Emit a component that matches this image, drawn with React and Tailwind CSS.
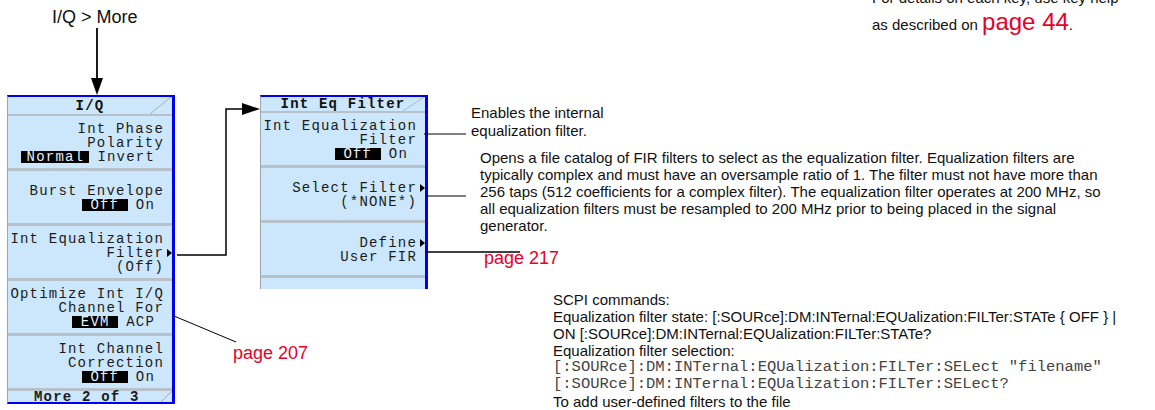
import React from 'react';

const mono = { fontFamily: '"Liberation Mono", "DejaVu Sans Mono", monospace' };

function Arrow() {
  return (
    <svg width="5" height="8" viewBox="0 0 5 8" className="absolute -right-[8px] top-[3px]">
      <polygon points="0,0 5,4 0,8" fill="#000" />
    </svg>
  );
}

function Option({ on, off, w }) {
  return (
    <div className="pr-[9px]">
      <span className={`inline-block bg-black text-center leading-[12px] text-[#e6f3ff] ${w}`}>{on}</span>
      <span className="ml-[8px]">{off}</span>
    </div>
  );
}

function Key({ lines, arrowAt = -1, h = 'h-[55px]' }) {
  return (
    <div className={`flex ${h} flex-col items-end justify-center border-b-[3px] border-b-[#b7c1ca] pr-[8px] pt-[2px]`}>
      {lines.map((ln, i) => (
        <div key={i} className="relative text-right">
          {typeof ln === 'string' ? ln : <Option {...ln} />}
          {i === arrowAt && <Arrow />}
        </div>
      ))}
    </div>
  );
}

function Title({ text, h }) {
  return (
    <div className={`relative flex ${h} items-center justify-center border-b-2 border-b-[#b7c1ca] font-bold text-[#111]`}>
      <span>{text}</span>
      <svg className="absolute right-0 top-0 h-full w-[24px]" viewBox="0 0 24 18" preserveAspectRatio="none">
        <line x1="2" y1="18" x2="23" y2="0" stroke="#a4afb8" strokeWidth="1" />
      </svg>
    </div>
  );
}

export default function App() {
  return (
    <div className="relative h-[410px] w-[1155px] overflow-hidden bg-white text-[#111]" style={{ fontFamily: '"Liberation Sans", Arial, sans-serif' }}>
      <div className="flex items-start gap-[85px] pl-[7px] pt-[95px] text-[14px] leading-[14px] tracking-[1.2px] text-[#1b1b1b]" style={mono}>
        <div className="flex w-[168px] flex-col border-l border-t-2 border-r-[3px] border-b-2 border-l-[#9aa6b0] border-t-[#0000f0] border-r-[#0000f0] border-b-[#0000f0] bg-[#cce7fb]">
          <Title text="I/Q" h="h-[19px]" />
          <Key lines={['Int Phase', 'Polarity', { on: 'Normal', off: 'Invert', w: 'w-[68px]' }]} />
          <Key lines={['Burst Envelope', { on: 'Off', off: 'On', w: 'w-[46px]' }]} />
          <Key lines={['Int Equalization', 'Filter', '(Off)']} arrowAt={1} />
          <Key lines={['Optimize Int I/Q', 'Channel For', { on: 'EVM', off: 'ACP', w: 'w-[46px]' }]} />
          <Key lines={['Int Channel', 'Correction', { on: 'Off', off: 'On', w: 'w-[46px]' }]} />
          <div className="relative flex h-[11px] items-center pl-[26px] font-bold">
            <span>More 2 of 3</span>
            <svg className="absolute right-0 top-0 h-full w-[12px]" viewBox="0 0 12 11" preserveAspectRatio="none">
              <line x1="1" y1="11" x2="12" y2="0" stroke="#a4afb8" strokeWidth="1" />
            </svg>
          </div>
        </div>

        <div className="flex w-[168px] flex-col border-l border-t-2 border-r-[3px] border-l-[#9aa6b0] border-t-[#0000f0] border-r-[#0000f0] bg-[#cce7fb]">
          <Title text="Int Eq Filter" h="h-[16px]" />
          <Key lines={['Int Equalization', 'Filter', { on: 'Off', off: 'On', w: 'w-[46px]' }]} />
          <Key lines={['Select Filter', '(*NONE*)']} arrowAt={0} />
          <Key lines={['Define', 'User FIR']} arrowAt={0} />
          <div className="h-[11px]" />
        </div>
      </div>

      <svg className="pointer-events-none absolute left-0 top-0" width="1155" height="410">
        <line x1="97" y1="28" x2="97" y2="80" stroke="#000" strokeWidth="1.8" />
        <polygon points="91,78 103,78 97,95" fill="#000" />
        <polyline points="177,255 226,255 226,109 245,109" fill="none" stroke="#000" strokeWidth="1.5" />
        <polygon points="242,103 260,109 242,115" fill="#000" />
        <line x1="424" y1="134" x2="466" y2="134" stroke="#000" strokeWidth="1" />
        <line x1="426" y1="196" x2="466" y2="196" stroke="#000" strokeWidth="1" />
        <line x1="426" y1="252" x2="520" y2="252" stroke="#000" strokeWidth="1.5" />
        <line x1="174" y1="316" x2="236" y2="342" stroke="#000" strokeWidth="1" />
      </svg>

      <div className="absolute left-[52px] top-[7px] text-[18px] leading-[20px]">I/Q &gt; More</div>

      <div className="absolute left-[872px] top-[-14px] text-[15px] leading-[24px]">
        <div>For details on each key, use key help</div>
        <div>
          as described on <span className="text-[24px] text-[#e8002a]">page 44</span>.
        </div>
      </div>

      <div className="absolute left-[471px] top-[104px] text-[15px] leading-[18px]">
        <div>Enables the internal</div>
        <div>equalization filter.</div>
      </div>

      <div className="absolute left-[480px] top-[149px] text-[15px] leading-[17px]">
        <div>Opens a file catalog of FIR filters to select as the equalization filter. Equalization filters are</div>
        <div>typically complex and must have an oversample ratio of 1. The filter must not have more than</div>
        <div>256 taps (512 coefficients for a complex filter). The equalization filter operates at 200 MHz, so</div>
        <div>all equalization filters must be resampled to 200 MHz prior to being placed in the signal</div>
        <div>generator.</div>
      </div>

      <div className="absolute left-[484px] top-[248px] text-[18px] leading-[20px] text-[#e8002a]">page 217</div>
      <div className="absolute left-[233px] top-[343px] text-[18px] leading-[20px] text-[#e8002a]">page 207</div>

      <div className="absolute left-[553px] top-[291px] text-[15px] leading-[17px]">
        <div>SCPI commands:</div>
        <div>Equalization filter state: [:SOURce]:DM:INTernal:EQUalization:FILTer:STATe {'{'} OFF {'}'} |</div>
        <div>ON [:SOURce]:DM:INTernal:EQUalization:FILTer:STATe?</div>
        <div>Equalization filter selection:</div>
        <div className="text-[15.5px] text-[#444]" style={{ fontFamily: '"Liberation Mono", "Courier New", monospace' }}>
          [:SOURce]:DM:INTernal:EQUalization:FILTer:SELect "filename"
        </div>
        <div className="text-[15.5px] text-[#444]" style={{ fontFamily: '"Liberation Mono", "Courier New", monospace' }}>
          [:SOURce]:DM:INTernal:EQUalization:FILTer:SELect?
        </div>
        <div>To add user-defined filters to the file</div>
      </div>
    </div>
  );
}
